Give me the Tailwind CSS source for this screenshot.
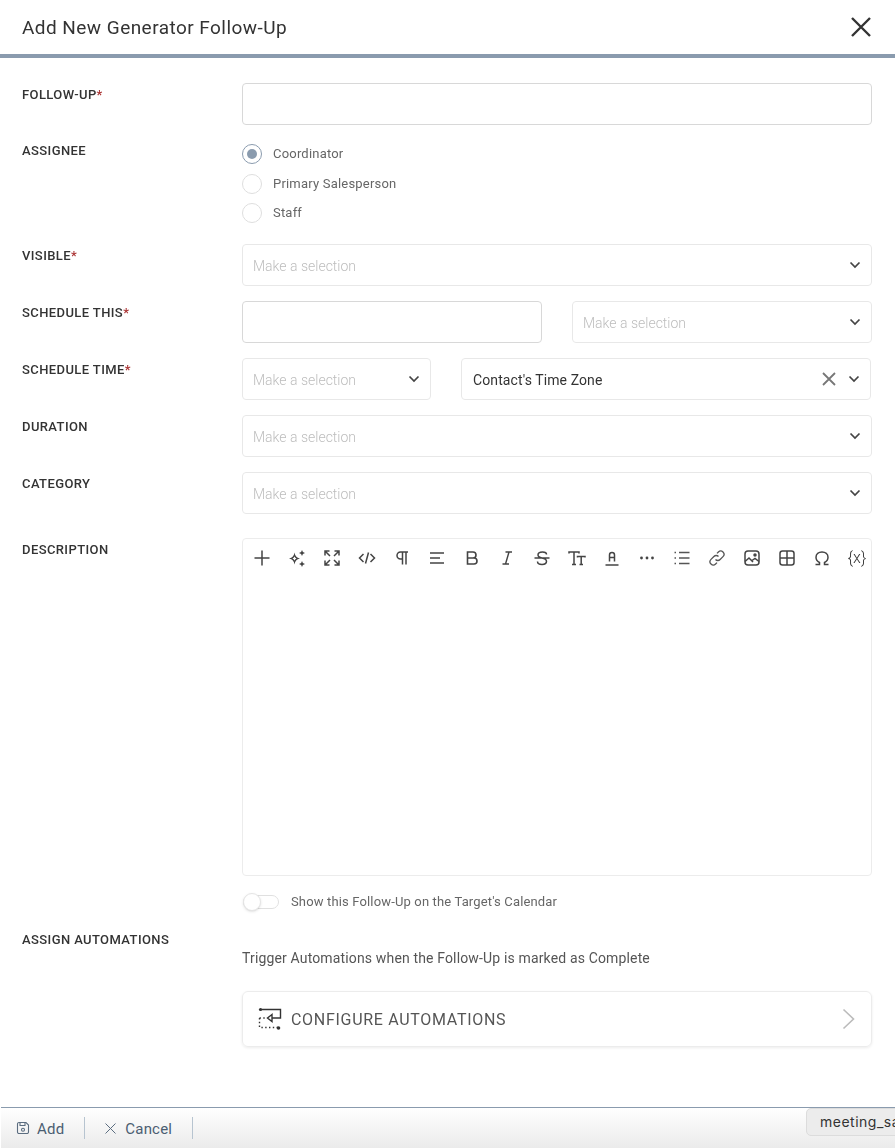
<!DOCTYPE html>
<html lang="en">
<head>
  <meta charset="UTF-8" />
  <title>Add New Generator Follow-Up</title>
  <script src="https://cdn.jsdelivr.net/npm/@tailwindcss/browser@4"></script>
</head>
<body class="font-['Roboto',sans-serif] bg-white text-[#333] h-[1148px] w-[895px] overflow-hidden flex flex-col">
  <!-- Header -->
  <header class="h-[58px] shrink-0 border-b-4 border-[#8a9bae] flex items-center justify-between pl-[22px] pr-[23px] will-change-transform">
    <h1 class="text-[19px] tracking-[0.45px] text-[#333] leading-none">Add New Generator Follow-Up</h1>
    <svg class="w-[22px] h-[22px]" viewBox="0 0 22 22" fill="none" stroke="#333" stroke-width="2.4"><path d="M2 2 L20 20 M20 2 L2 20"/></svg>
  </header>

  <main class="flex-1 pt-[25px] pl-[22px] pr-[23px] will-change-transform">
    <!-- Follow-up -->
    <div class="flex mb-[19px]">
      <label class="w-[220px] shrink-0 pt-[4px] text-[13px] font-medium tracking-[0.4px] leading-[15px] text-[#333]">FOLLOW-UP<span class="text-[#a33]">*</span></label>
      <div class="flex-1 h-[42px] border border-[#d8d8d8] rounded-[4px]"></div>
    </div>

    <!-- Assignee -->
    <div class="flex mb-[21px]">
      <label class="w-[220px] shrink-0 mt-[-1px] text-[13px] font-medium tracking-[0.4px] leading-[15px] text-[#333]">ASSIGNEE</label>
      <div class="flex-1 text-[13px] text-[#666] tracking-[0.2px]">
        <div class="flex items-center h-[20px] mb-[9.5px]">
          <span class="w-[20px] h-[20px] rounded-full border border-[#8a9bae] flex items-center justify-center mr-[11px]"><span class="w-[10px] h-[10px] rounded-full bg-[#8a9bae]"></span></span>Coordinator
        </div>
        <div class="flex items-center h-[20px] mb-[9.5px]">
          <span class="w-[20px] h-[20px] rounded-full border border-[#dedede] mr-[11px]"></span>Primary Salesperson
        </div>
        <div class="flex items-center h-[20px]">
          <span class="w-[20px] h-[20px] rounded-full border border-[#dedede] mr-[11px]"></span>Staff
        </div>
      </div>
    </div>

    <!-- Visible -->
    <div class="flex mb-[15px]">
      <label class="w-[220px] shrink-0 pt-[4px] text-[13px] font-medium tracking-[0.4px] leading-[15px] text-[#333]">VISIBLE<span class="text-[#a33]">*</span></label>
      <div class="flex-1 h-[42px] border border-[#e8e8e8] rounded-[4px] flex items-center justify-between pl-[10px] pr-[10px] text-[14px] font-light text-[#bdbdbd]">
        <span class="pt-[2px]">Make a selection</span>
        <svg class="w-[12px] h-[8px]" viewBox="0 0 12 8" fill="none" stroke="#444" stroke-width="1.7"><path d="M1.5 1.5 L6 6 L10.5 1.5"/></svg>
      </div>
    </div>

    <!-- Schedule this -->
    <div class="flex mb-[15px]">
      <label class="w-[220px] shrink-0 pt-[4px] text-[13px] font-medium tracking-[0.4px] leading-[15px] text-[#333]">SCHEDULE THIS<span class="text-[#a33]">*</span></label>
      <div class="flex-1 flex gap-[30px]">
        <div class="w-[300px] h-[42px] border border-[#d8d8d8] rounded-[4px]"></div>
        <div class="flex-1 h-[42px] border border-[#e8e8e8] rounded-[4px] flex items-center justify-between pl-[10px] pr-[10px] text-[14px] font-light text-[#bdbdbd]">
          <span class="pt-[2px]">Make a selection</span>
          <svg class="w-[12px] h-[8px]" viewBox="0 0 12 8" fill="none" stroke="#444" stroke-width="1.7"><path d="M1.5 1.5 L6 6 L10.5 1.5"/></svg>
        </div>
      </div>
    </div>

    <!-- Schedule time -->
    <div class="flex mb-[15px]">
      <label class="w-[220px] shrink-0 pt-[4px] text-[13px] font-medium tracking-[0.4px] leading-[15px] text-[#333]">SCHEDULE TIME<span class="text-[#a33]">*</span></label>
      <div class="flex-1 flex gap-[30px]">
        <div class="w-[189px] h-[42px] border border-[#e8e8e8] rounded-[4px] flex items-center justify-between pl-[10px] pr-[10px] text-[14px] font-light text-[#bdbdbd]">
          <span class="pt-[2px]">Make a selection</span>
          <svg class="w-[12px] h-[8px]" viewBox="0 0 12 8" fill="none" stroke="#444" stroke-width="1.7"><path d="M1.5 1.5 L6 6 L10.5 1.5"/></svg>
        </div>
        <div class="w-[410px] h-[42px] border border-[#e8e8e8] rounded-[4px] flex items-center pl-[11px] pr-[10px] text-[14px] text-[#333] tracking-[0.1px]">
          <span class="flex-1 pt-[2px]">Contact's Time Zone</span>
          <svg class="w-[14px] h-[14px] mr-[12px]" viewBox="0 0 14 14" fill="none" stroke="#777" stroke-width="1.8"><path d="M1 1 L13 13 M13 1 L1 13"/></svg>
          <svg class="w-[12px] h-[8px]" viewBox="0 0 12 8" fill="none" stroke="#444" stroke-width="1.7"><path d="M1.5 1.5 L6 6 L10.5 1.5"/></svg>
        </div>
      </div>
    </div>

    <!-- Duration -->
    <div class="flex mb-[15px]">
      <label class="w-[220px] shrink-0 pt-[4px] text-[13px] font-medium tracking-[0.4px] leading-[15px] text-[#333]">DURATION</label>
      <div class="flex-1 h-[42px] border border-[#e8e8e8] rounded-[4px] flex items-center justify-between pl-[10px] pr-[10px] text-[14px] font-light text-[#bdbdbd]">
        <span class="pt-[2px]">Make a selection</span>
        <svg class="w-[12px] h-[8px]" viewBox="0 0 12 8" fill="none" stroke="#444" stroke-width="1.7"><path d="M1.5 1.5 L6 6 L10.5 1.5"/></svg>
      </div>
    </div>

    <!-- Category -->
    <div class="flex mb-[24px]">
      <label class="w-[220px] shrink-0 pt-[4px] text-[13px] font-medium tracking-[0.4px] leading-[15px] text-[#333]">CATEGORY</label>
      <div class="flex-1 h-[42px] border border-[#e8e8e8] rounded-[4px] flex items-center justify-between pl-[10px] pr-[10px] text-[14px] font-light text-[#bdbdbd]">
        <span class="pt-[2px]">Make a selection</span>
        <svg class="w-[12px] h-[8px]" viewBox="0 0 12 8" fill="none" stroke="#444" stroke-width="1.7"><path d="M1.5 1.5 L6 6 L10.5 1.5"/></svg>
      </div>
    </div>

    <!-- Description -->
    <div class="flex mb-[16px]">
      <label class="w-[220px] shrink-0 pt-[4px] text-[13px] font-medium tracking-[0.4px] leading-[15px] text-[#333]">DESCRIPTION</label>
      <div class="flex-1 h-[338px] border border-[#ececec] rounded-[4px]">
        <div class="flex items-center justify-between h-[38px] pl-[10px] pr-[5px]">
          <svg class="w-[18px] h-[18px]" viewBox="0 0 18 18" fill="none" stroke="#444" stroke-width="1.5"><path d="M9 1.5V16.5M1.5 9H16.5"/></svg>
          <svg class="w-[18px] h-[18px]" viewBox="0 0 18 18" fill="#444"><path d="M6.5 3.5C7 7 8.5 8.8 12 9.5C8.5 10.2 7 12 6.5 15.5C6 12 4.5 10.2 1 9.5C4.5 8.8 6 7 6.5 3.5ZM6.5 7.5C6.1 8.4 5.4 9.1 4.5 9.5C5.4 9.9 6.1 10.6 6.5 11.5C6.9 10.6 7.6 9.9 8.5 9.5C7.6 9.1 6.9 8.4 6.5 7.5Z" fill-rule="evenodd"/><path d="M14 1L14.9 3.1L17 4L14.9 4.9L14 7L13.1 4.9L11 4L13.1 3.1Z"/><path d="M14 12L14.9 14.1L17 15L14.9 15.9L14 18L13.1 15.9L11 15L13.1 14.1Z"/></svg>
          <svg class="w-[18px] h-[18px]" viewBox="0 0 18 18" fill="none" stroke="#444" stroke-width="1.5"><path d="M2 6.5V2H6.5M2 2L7 7M11.5 2H16V6.5M16 2L11 7M2 11.5V16H6.5M2 16L7 11M16 11.5V16H11.5M16 16L11 11"/></svg>
          <svg class="w-[18px] h-[18px]" viewBox="0 0 18 18" fill="none" stroke="#444" stroke-width="1.5"><path d="M5.5 5L1.5 9L5.5 13M12.5 5L16.5 9L12.5 13M10.5 3.5L7.5 14.5"/></svg>
          <svg class="w-[18px] h-[18px]" viewBox="0 0 18 18" fill="none" stroke="#444" stroke-width="1.5"><path d="M15 3H7.5a3.5 3.5 0 0 0 0 7H9M9.5 3V15.5M13 3V15.5" /></svg>
          <svg class="w-[18px] h-[18px]" viewBox="0 0 18 18" fill="none" stroke="#444" stroke-width="1.5"><path d="M2 4H16M2 9H12M2 14H16"/></svg>
          <svg class="w-[18px] h-[18px]" viewBox="0 0 18 18" fill="none" stroke="#444" stroke-width="1.6"><path d="M4.5 3H10a3 3 0 0 1 0 6H4.5ZM4.5 9H11a3 3 0 0 1 0 6H4.5Z"/></svg>
          <svg class="w-[18px] h-[18px]" viewBox="0 0 18 18" fill="none" stroke="#444" stroke-width="1.4"><path d="M7.5 3H14M4.5 15H11M11 3L7.5 15"/></svg>
          <svg class="w-[18px] h-[18px]" viewBox="0 0 18 18" fill="none" stroke="#444" stroke-width="1.5"><path d="M13.5 5.5C13.5 3.8 11.5 3 9.5 3C7 3 5 4 5 6C5 8 7 8.6 9 9C11 9.4 13.5 10 13.5 12.3C13.5 14.3 11.5 15.5 9 15.5C6.5 15.5 4.5 14.4 4.5 12.5M1.5 9H16.5"/></svg>
          <svg class="w-[18px] h-[18px]" viewBox="0 0 18 18" fill="none" stroke="#444" stroke-width="1.5"><path d="M1 4.5V3H11V4.5M6 3V15.5M4 15.5H8M9.5 8.5V7.5H17V8.5M13.2 7.5V15.5H11.5M13.2 15.5H15"/></svg>
          <svg class="w-[18px] h-[18px]" viewBox="0 0 18 18" fill="none" stroke="#444" stroke-width="1.5"><path d="M6.5 12.5V6a2.5 2.5 0 0 1 5 0V12.5M6.5 8.5H11.5M2.5 16H15.5"/></svg>
          <svg class="w-[18px] h-[18px]" viewBox="0 0 18 18" fill="#444"><circle cx="3.5" cy="9" r="1.4"/><circle cx="9" cy="9" r="1.4"/><circle cx="14.5" cy="9" r="1.4"/></svg>
          <svg class="w-[18px] h-[18px]" viewBox="0 0 18 18" fill="none" stroke="#555" stroke-width="1.3"><path d="M6 3.5H16.5M6 9H16.5M6 14.5H16.5M1.5 3.5H3M1.5 9H3M1.5 14.5H3"/></svg>
          <svg class="w-[18px] h-[18px]" viewBox="0 0 18 18" fill="none" stroke="#555" stroke-width="1.3"><path d="M7.5 10.5a3.2 3.2 0 0 0 4.6 0L15 7.6a3.2 3.2 0 0 0-4.6-4.6L9 4.4M10.5 7.5a3.2 3.2 0 0 0-4.6 0L3 10.4A3.2 3.2 0 0 0 7.6 15L9 13.6"/></svg>
          <svg class="w-[18px] h-[18px]" viewBox="0 0 18 18" fill="none" stroke="#444" stroke-width="1.5"><rect x="2" y="2" width="14" height="14" rx="3"/><path d="M2 12.5L6 9L10 13M9 11.5L12 9.5L16 12.5"/><circle cx="12" cy="6" r="1" fill="#444"/></svg>
          <svg class="w-[18px] h-[18px]" viewBox="0 0 18 18" fill="none" stroke="#444" stroke-width="1.5"><rect x="2" y="2" width="14" height="14" rx="2.5"/><path d="M2 9H16M9 2V16"/></svg>
          <svg class="w-[18px] h-[18px]" viewBox="0 0 18 18" fill="none" stroke="#444" stroke-width="1.5"><path d="M2.5 15.5H6.5V13.5C4.5 12.5 3 10.8 3 8.3C3 5 5.6 3 9 3C12.4 3 15 5 15 8.3C15 10.8 13.5 12.5 11.5 13.5V15.5H15.5"/></svg>
          <span class="w-[18px] text-[16px] font-light leading-none text-[#333] text-center whitespace-nowrap flex justify-center">{x}</span>
        </div>
      </div>
    </div>

    <!-- Toggle -->
    <div class="flex pl-[220px] mb-[20px]">
      <div class="flex items-center h-[20px]">
        <span class="relative ml-[1px] w-[36px] h-[14px] rounded-full border border-[#e0e0e0] mr-[12px]">
          <span class="absolute left-[-1px] top-[-3px] w-[18px] h-[18px] rounded-full bg-white border border-[#e4e4e4] shadow-sm"></span>
        </span>
        <span class="text-[13px] text-[#666] tracking-[0.15px]">Show this Follow-Up on the Target's Calendar</span>
      </div>
    </div>

    <!-- Automations -->
    <div class="flex">
      <label class="w-[220px] shrink-0 text-[13px] font-medium tracking-[0.4px] leading-[15px] text-[#333]">ASSIGN AUTOMATIONS</label>
      <div class="flex-1">
        <p class="mt-[17px] text-[14px] leading-[18px] text-[#555] tracking-[0.15px] mb-[24px]">Trigger Automations when the Follow-Up is marked as Complete</p>
        <div class="h-[56px] border border-[#ececec] rounded-[6px] shadow-[0_1px_3px_rgba(0,0,0,0.08)] flex items-center pl-[15px] pr-[16px]">
          <svg class="w-[24px] h-[24px] mr-[9px]" viewBox="0 0 24 24" fill="none" stroke="#333" stroke-width="1.4">
            <circle cx="2.5" cy="2.5" r="1.6" fill="#333" stroke="none"/>
            <path d="M2.5 2.5H22.5V11H14"/>
            <path d="M14 7.5L9.5 11L14 14.5Z"/>
            <path d="M1.5 11H8M1.5 11V20.5H20" stroke-dasharray="1.4 2.4"/>
            <circle cx="20.5" cy="21" r="1.8" fill="#333" stroke="none"/>
          </svg>
          <span class="flex-1 pt-[2px] text-[16px] text-[#555] tracking-[0.7px]">CONFIGURE AUTOMATIONS</span>
          <svg class="w-[13px] h-[22px]" viewBox="0 0 13 22" fill="none" stroke="#bbb" stroke-width="1.6"><path d="M1.5 1.5L11.5 11L1.5 20.5"/></svg>
        </div>
      </div>
    </div>
  </main>

  <!-- Footer -->
  <footer class="relative h-[41px] shrink-0 border-t border-[#8a9bae] ml-[1px] bg-linear-to-b from-white to-[#ebebeb] flex items-center text-[15px] text-[#4b5e72] tracking-[0.2px]">
    <div class="flex items-center pl-[15px] pr-[20px]">
      <svg class="w-[14px] h-[14px] mr-[7px]" viewBox="0 0 14 14" fill="none" stroke="#5b6d80" stroke-width="1.1"><path d="M1.5 3a1.5 1.5 0 0 1 1.5-1.5H10L12.5 4V11a1.5 1.5 0 0 1-1.5 1.5H3A1.5 1.5 0 0 1 1.5 11Z"/><path d="M4 1.5V4.5H9V1.5"/><circle cx="7" cy="8.8" r="1.5"/></svg>
      <span class="pt-[2px]">Add</span>
    </div>
    <span class="w-px h-[22px] bg-[#b7c4d0]"></span>
    <div class="flex items-center pl-[20px] pr-[20px]">
      <svg class="w-[11px] h-[11px] mr-[9px]" viewBox="0 0 11 11" fill="none" stroke="#5b6d80" stroke-width="1"><path d="M.5.5L10.5 10.5M10.5.5L.5 10.5"/></svg>
      <span class="pt-[2px]">Cancel</span>
    </div>
    <span class="w-px h-[22px] bg-[#b7c4d0]"></span>
    <div class="absolute left-[805px] top-0 w-[110px] h-[28px] rounded-l-[5px] bg-[#ececec] border border-[#dcdcdc] pl-[13px] leading-[26px] text-[#333] text-[14px] tracking-[0.5px] font-['Inter',sans-serif] whitespace-nowrap">meeting_sa</div>
  </footer>
</body>
</html>
